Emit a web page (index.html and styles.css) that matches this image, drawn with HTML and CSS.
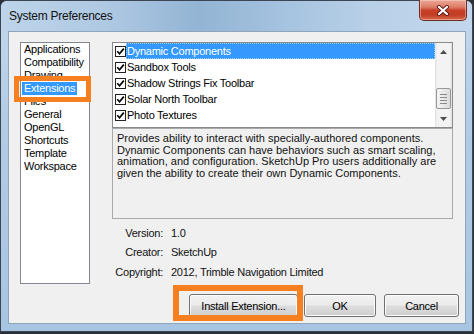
FILE: index.html
```html
<!DOCTYPE html>
<html lang="en">
<head>
    <meta charset="UTF-8">
    <meta name="viewport" content="width=device-width, initial-scale=1.0">
    <title>System Preferences</title>
    <link rel="stylesheet" href="styles.css">
</head>
<body>
    <div class="window">
        <div class="titlebar">
            <span class="title">System Preferences</span>
            <button class="close-btn" title="Close">
                <svg width="14" height="11" viewBox="0 0 14 11">
                    <path d="M3 2 L11 9 M11 2 L3 9" stroke="#5a1d14" stroke-width="4" stroke-linecap="round"/>
                    <path d="M3 2 L11 9 M11 2 L3 9" stroke="#fff" stroke-width="2.2" stroke-linecap="round"/>
                </svg>
            </button>
        </div>

        <div class="client">
            <div class="main">
                <ul class="pages">
                    <li>Applications</li>
                    <li>Compatibility</li>
                    <li>Drawing</li>
                    <li class="selected">Extensions</li>
                    <li>Files</li>
                    <li>General</li>
                    <li>OpenGL</li>
                    <li>Shortcuts</li>
                    <li>Template</li>
                    <li>Workspace</li>
                </ul>

                <div class="detail">
                    <div class="ext-list">
                        <div class="rows">
                            <div class="row selected">
                                <svg class="check" width="11" height="11" viewBox="0 0 11 11"><rect x="0.5" y="0.5" width="10" height="10" fill="#fff" stroke="#222"/><path d="M2.3 5.3 L4.5 7.8 L8.8 2.6" fill="none" stroke="#000" stroke-width="1.7"/></svg>
                                <span class="label">Dynamic Components</span>
                            </div>
                            <div class="row">
                                <svg class="check" width="11" height="11" viewBox="0 0 11 11"><rect x="0.5" y="0.5" width="10" height="10" fill="#fff" stroke="#222"/><path d="M2.3 5.3 L4.5 7.8 L8.8 2.6" fill="none" stroke="#000" stroke-width="1.7"/></svg>
                                <span class="label">Sandbox Tools</span>
                            </div>
                            <div class="row">
                                <svg class="check" width="11" height="11" viewBox="0 0 11 11"><rect x="0.5" y="0.5" width="10" height="10" fill="#fff" stroke="#222"/><path d="M2.3 5.3 L4.5 7.8 L8.8 2.6" fill="none" stroke="#000" stroke-width="1.7"/></svg>
                                <span class="label">Shadow Strings Fix Toolbar</span>
                            </div>
                            <div class="row">
                                <svg class="check" width="11" height="11" viewBox="0 0 11 11"><rect x="0.5" y="0.5" width="10" height="10" fill="#fff" stroke="#222"/><path d="M2.3 5.3 L4.5 7.8 L8.8 2.6" fill="none" stroke="#000" stroke-width="1.7"/></svg>
                                <span class="label">Solar North Toolbar</span>
                            </div>
                            <div class="row">
                                <svg class="check" width="11" height="11" viewBox="0 0 11 11"><rect x="0.5" y="0.5" width="10" height="10" fill="#fff" stroke="#222"/><path d="M2.3 5.3 L4.5 7.8 L8.8 2.6" fill="none" stroke="#000" stroke-width="1.7"/></svg>
                                <span class="label">Photo Textures</span>
                            </div>
                        </div>
                        <div class="scrollbar">
                            <div class="arrow">
                                <svg width="7" height="4" viewBox="0 0 7 4"><path d="M0 4 L3.5 0 L7 4 Z" fill="#4d4d4d"/></svg>
                            </div>
                            <div class="track">
                                <div class="thumb"><span></span><span></span><span></span><span></span></div>
                            </div>
                            <div class="arrow">
                                <svg width="7" height="4" viewBox="0 0 7 4"><path d="M0 0 L7 0 L3.5 4 Z" fill="#4d4d4d"/></svg>
                            </div>
                        </div>
                    </div>

                    <div class="desc">
                        Provides ability to interact with specially-authored components.<br>
                        Dynamic Components can have behaviors such as smart scaling,<br>
                        animation, and configuration. SketchUp Pro users additionally are<br>
                        given the ability to create their own Dynamic Components.
                    </div>

                    <div class="info">
                        <span class="key">Version:</span><span>1.0</span>
                        <span class="key">Creator:</span><span>SketchUp</span>
                        <span class="key">Copyright:</span><span>2012, Trimble Navigation Limited</span>
                    </div>
                </div>
            </div>

            <div class="actions">
                <button class="btn btn-install">Install Extension...</button>
                <button class="btn btn-ok">OK</button>
                <button class="btn btn-cancel">Cancel</button>
            </div>

            <!-- orange callouts drawn over the dialog -->
            <div class="mark mark-page"></div>
            <div class="mark mark-install"></div>
        </div>
    </div>
</body>
</html>
```

FILE: styles.css
```css
body {
    margin: 0;
    padding: 0;
    background-color: #2b3036;
    font-family: "Liberation Sans", Arial, sans-serif;
    font-size: 11px;
    letter-spacing: -0.25px;
    color: #000;
    width: 474px;
    height: 334px;
    overflow: hidden;
}

.window {
    box-sizing: border-box;
    width: 473px;
    height: 332px;
    border: 1px solid #3a4654;
    border-radius: 7px 7px 0 0;
    background: linear-gradient(180deg, #c3d8ec 0%, #b1cbe5 40%, #a7c5e2 100%);
    display: flex;
    flex-direction: column;
}

.titlebar {
    height: 30px;
    display: flex;
    align-items: flex-start;
    padding-left: 8px;
    border-radius: 6px 6px 0 0;
    background: linear-gradient(90deg, #bdd4ea 0%, #afc9e3 22%, #93b4d4 42%, #a3c1de 58%, #b8d0e8 78%, #c2d7ec 100%);
}

.title {
    padding-top: 7px;
    font-size: 12px;
    line-height: 16px;
    color: #111;
}

.close-btn {
    margin: -1px 5px 0 auto;
    width: 48px;
    height: 21px;
    padding: 0;
    border: 1px solid #6e2c22;
    border-top: none;
    border-radius: 0 0 5px 5px;
    background: linear-gradient(180deg, #eba896 0%, #de7d66 35%, #c93f27 52%, #c13d25 75%, #d86a4b 100%);
    box-shadow: inset 0 0 0 1px rgba(255, 220, 210, 0.45);
    display: flex;
    align-items: center;
    justify-content: center;
}

.client {
    position: relative;
    box-sizing: border-box;
    width: 458px;
    height: 293px;
    margin-left: 7px;
    border: 1px solid #8fa5bc;
    background-color: #f0f0f0;
    padding: 10px 6px 0 11px;
    display: flex;
    flex-direction: column;
}

.main {
    display: flex;
    gap: 22px;
}

.pages {
    box-sizing: border-box;
    list-style: none;
    margin: 0;
    padding: 0 0 0 1px;
    width: 70px;
    height: 242px;
    border: 1px solid #828790;
    background-color: #fff;
    line-height: 13px;
}

.pages li {
    width: fit-content;
    padding: 0 2px 0 2px;
    height: 13px;
    white-space: nowrap;
}

.pages li.selected {
    background-color: #3399ff;
    color: #fff;
}

.detail {
    width: 341px;
}

.ext-list {
    box-sizing: border-box;
    height: 86px;
    border: 1px solid #8a8a8a;
    background-color: #fff;
    display: flex;
}

.rows {
    flex: 1;
}

.row {
    display: flex;
    align-items: center;
    height: 16px;
    padding-left: 2px;
}

.check {
    flex: none;
}

.label {
    flex: 1;
    line-height: 16px;
    padding-left: 1px;
    white-space: nowrap;
}

.row.selected .label {
    background-color: #3399ff;
    color: #fff;
    outline: 1px dotted #9fcfff;
    outline-offset: -1px;
}

.scrollbar {
    width: 17px;
    display: flex;
    flex-direction: column;
    background: linear-gradient(90deg, #e2e2e2 0%, #f3f3f3 15%, #f3f3f3 85%, #e2e2e2 100%);
}

.arrow {
    height: 17px;
    display: flex;
    align-items: center;
    justify-content: center;
}

.track {
    flex: 1;
    padding-top: 28px;
}

.thumb {
    box-sizing: border-box;
    height: 21px;
    margin: 0 1px;
    border: 1px solid #979797;
    border-radius: 2px;
    background: linear-gradient(90deg, #f4f4f4 0%, #e9e9e9 50%, #dcdcdc 100%);
    display: flex;
    flex-direction: column;
    align-items: center;
    justify-content: center;
    gap: 2px;
}

.thumb span {
    width: 7px;
    height: 1px;
    background-color: #8a8a8a;
}

.desc {
    box-sizing: border-box;
    height: 91px;
    border: 1px solid #a9a9a9;
    padding: 4px 0 0 4px;
    line-height: 11.7px;
    letter-spacing: 0;
    white-space: nowrap;
    color: #111;
}

.info {
    display: grid;
    grid-template-columns: 51px auto;
    column-gap: 8px;
    margin-top: 5px;
    line-height: 19.3px;
    color: #111;
}

.key {
    text-align: right;
}

.actions {
    display: flex;
    justify-content: flex-end;
    margin-top: 10px;
}

.btn {
    box-sizing: border-box;
    height: 23px;
    padding: 0;
    border: 1px solid #707070;
    border-radius: 3px;
    background: linear-gradient(180deg, #f2f2f2 0%, #ebebeb 48%, #dddddd 52%, #cfcfcf 100%);
    box-shadow: inset 0 0 0 1px #fcfcfc;
    font-family: "Liberation Sans", Arial, sans-serif;
    font-size: 11px;
    letter-spacing: -0.25px;
    color: #000;
}

.btn-install {
    width: 109px;
    margin-right: 6px;
}

.btn-ok {
    width: 72px;
    margin-right: 8px;
}

.btn-cancel {
    width: 75px;
}

.mark {
    position: absolute;
    box-sizing: border-box;
    border-style: solid;
    border-color: #f6801f;
}

.mark-page {
    left: 5px;
    top: 44px;
    width: 77px;
    height: 26px;
    border-width: 5px;
}

.mark-install {
    left: 164px;
    top: 253px;
    width: 130px;
    height: 36px;
    border-width: 6px;
}
```
